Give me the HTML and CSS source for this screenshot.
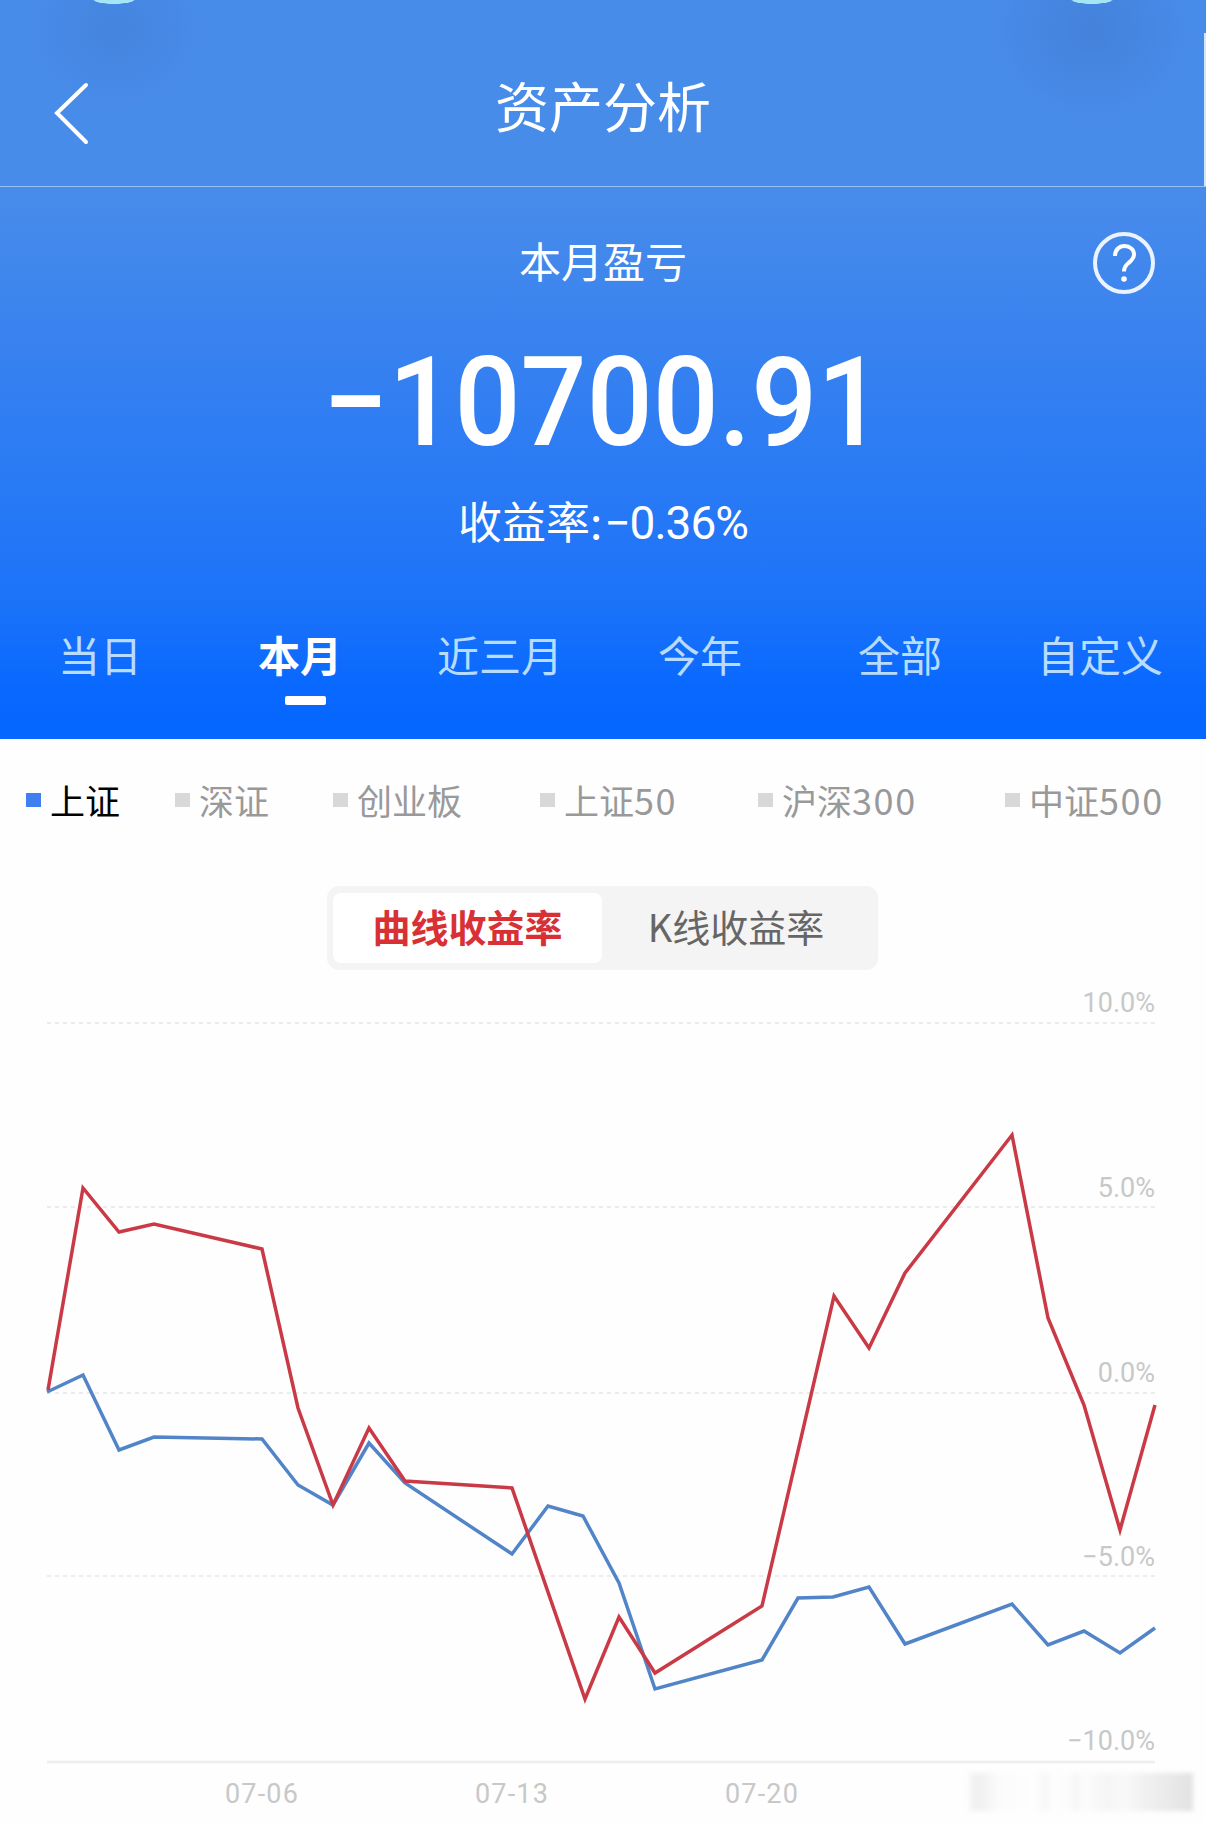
FILE: index.html
```html
<!DOCTYPE html>
<html lang="zh-CN">
<head>
<meta charset="utf-8">
<title>资产分析</title>
<link rel="stylesheet" href="styles.css">
</head>
<body>
<div class="page">
  <header class="hero">
    <div class="navbar">
      <svg class="back" viewBox="0 0 36 64"><path d="M33 3 4 31 33 60" fill="none" stroke="#fff" stroke-width="4" stroke-linecap="round"/></svg>
      <h1 class="title">资产分析</h1>
    </div>
    <div class="summary">
      <div class="period">本月盈亏</div>
      <svg class="help" viewBox="0 0 64 64"><circle cx="32" cy="32" r="29" fill="none" stroke="#eaf3ff" stroke-width="4"/><path d="M23 25c0-6 4-10 9.500-10 5.500 0 9.500 3.500 9.500 8.500 0 4-2.500 6-5.500 8.500-3 2.500-4.500 4.500-4.500 8.500" fill="none" stroke="#fff" stroke-width="4"/><circle cx="32" cy="48" r="2.800" fill="#fff"/></svg>
      <div class="amount">−10700.91</div>
      <div class="rate">收益率:<span class="rate-num">−0.36%</span></div>
    </div>
    <nav class="tabs">
      <span class="tab">当日</span>
      <span class="tab active">本月</span>
      <span class="tab">近三月</span>
      <span class="tab">今年</span>
      <span class="tab">全部</span>
      <span class="tab">自定义</span>
    </nav>
  </header>
  <main class="content">
    <div class="legend">
      <span class="legend-item on">上证</span>
      <span class="legend-item">深证</span>
      <span class="legend-item">创业板</span>
      <span class="legend-item"><span>上证<span class="num">50</span></span></span>
      <span class="legend-item"><span>沪深<span class="num">300</span></span></span>
      <span class="legend-item"><span>中证<span class="num">500</span></span></span>
    </div>
    <div class="toggle">
      <span class="toggle-btn active">曲线收益率</span>
      <span class="toggle-btn">K线收益率</span>
    </div>
    <div class="chart">
      <svg class="chart-svg" viewBox="0 985 1206 838">
        <g class="grid">
          <line x1="47" x2="1155" y1="1023" y2="1023"/>
          <line x1="47" x2="1155" y1="1207" y2="1207"/>
          <line x1="47" x2="1155" y1="1393" y2="1393"/>
          <line x1="47" x2="1155" y1="1576" y2="1576"/>
        </g>
        <line class="base" x1="47" x2="1155" y1="1762" y2="1762"/>
        <g class="ylabels">
          <text x="1155" y="1012">10.0%</text>
          <text x="1155" y="1197">5.0%</text>
          <text x="1155" y="1382">0.0%</text>
          <text x="1155" y="1566">−5.0%</text>
          <text x="1155" y="1750">−10.0%</text>
        </g>
        <g class="xlabels">
          <text x="262" y="1803">07-06</text>
          <text x="512" y="1803">07-13</text>
          <text x="762" y="1803">07-20</text>
        </g>
        <polyline class="series blue" points="47,1392 83,1375 119,1450 154,1437 262,1439 298,1485 333,1505 369,1443 405,1483 512,1554 548,1506 583,1516 619,1583 655,1689 762,1660 798,1598 833,1597 869,1587 905,1644 1012,1604 1048,1645 1084,1631 1120,1653 1155,1628"/>
        <polyline class="series red" points="48,1390 83,1188 119,1232 154,1224 262,1249 298,1408 333,1505 369,1428 405,1481 512,1488 585,1699 619,1617 655,1673 762,1606 834,1296 869,1348 905,1273 1012,1135 1048,1318 1084,1405 1120,1530 1155,1405"/>
      </svg>
      <div class="smudge"></div>
    </div>
  </main>
</div>
</body>
</html>
```
FILE: styles.css
```css
* { box-sizing: border-box; }
html, body { margin: 0; padding: 0; }
body {
  width: 1206px;
  height: 1823px;
  overflow: hidden;
  background: #fefefe;
  font-family: "Noto Sans CJK SC", "Roboto", sans-serif;
}
.page { width: 1206px; height: 1823px; display: flex; flex-direction: column; }

.hero {
  height: 740px;
  color: #fff;
  background:
    radial-gradient(ellipse 21px 4px at 114px 0, #a4e6f6 0 90%, transparent 100%),
    radial-gradient(ellipse 21px 4px at 1092px 0, #a4e6f6 0 90%, transparent 100%),
    radial-gradient(ellipse 100px 90px at 115px 30px, rgba(60,110,190,.26), rgba(60,110,190,0)),
    radial-gradient(ellipse 110px 100px at 1092px 30px, rgba(60,110,190,.34), rgba(60,110,190,0)),
    linear-gradient(180deg, #488cea 0, #488cea 190px, #3a83ef 330px, #1c73f9 600px, #0868ff 690px, #0567ff 740px);
}
.navbar {
  height: 187px;
  position: relative;
  display: flex;
  align-items: flex-end;
  justify-content: center;
  border-bottom: 1px solid rgba(255,255,255,.45);
}
.navbar::after {
  content: "";
  position: absolute;
  right: 0;
  top: 33px;
  width: 2px;
  height: 153px;
  background: #cfe6fb;
}
.back { position: absolute; left: 53px; top: 82px; width: 36px; height: 64px; }
.title { margin: 0 0 43px; font-size: 54px; line-height: 76px; font-weight: 400; letter-spacing: 0; }

.summary { position: relative; display: flex; flex-direction: column; align-items: center; }
.period { margin-top: 43px; font-size: 42px; line-height: 60px; font-weight: 400; }
.help { position: absolute; left: 1092px; top: 44px; width: 64px; height: 64px; }
.amount {
  margin-top: 48px;
  font-family: "Roboto", sans-serif;
  font-size: 125px;
  line-height: 130px;
  font-weight: 500;
  transform: scaleX(.93);
}
.rate { margin-top: 21px; font-size: 44px; line-height: 62px; font-weight: 400; display: flex; align-items: baseline; }
.rate-num { font-family: "Roboto", sans-serif; font-size: 46px; font-weight: 400; margin-left: 2px; letter-spacing: -1px; }

.tabs {
  margin-top: 71px;
  display: grid;
  grid-template-columns: repeat(6, 200px);
  font-size: 42px;
  line-height: 58px;
  font-weight: 400;
  color: #b7dcff;
  text-align: center;
}
.tab { position: relative; }
.tab.active { color: #fff; font-weight: 700; }
.tab.active::after {
  content: "";
  position: absolute;
  left: 85px;
  top: 71px;
  width: 41px;
  height: 9px;
  border-radius: 2px;
  background: #fff;
}

.content { flex: 1; display: flex; flex-direction: column; }
.legend {
  margin-top: 36px;
  padding-left: 26px;
  display: grid;
  grid-template-columns: 149px 158px 207px 218px 247px auto;
  font-size: 35px;
  line-height: 48px;
  font-weight: 400;
  color: #999;
}
.legend-item { display: flex; align-items: center; gap: 9px; white-space: nowrap; }
.legend-item::before { content: ""; width: 15px; height: 14px; background: #d8d8d8; flex: none; }
.legend-item.on { color: #000; }
.legend-item.on::before { background: #3f7ff0; }
.num { letter-spacing: 1.6px; font-size: 36px; }

.toggle {
  margin: 62px 0 0 327px;
  width: 551px;
  height: 84px;
  padding: 7px 0 7px 6px;
  display: flex;
  background: #f4f4f4;
  border-radius: 12px;
  font-size: 38px;
  line-height: 66px;
  color: #666;
}
.toggle-btn { width: 269px; text-align: center; font-weight: 400; }
.toggle-btn + .toggle-btn { width: 276px; padding-right: 8px; }
.toggle-btn.active { background: #fff; border-radius: 8px; color: #d93035; font-weight: 700; }

.chart { position: relative; flex: 1; margin-top: 15px; }
.chart-svg { display: block; width: 1206px; height: 838px; }
.grid line { stroke: #ececec; stroke-width: 2; stroke-dasharray: 4 4; }
.base { stroke: #eeeeee; stroke-width: 2.500; }
.ylabels text, .xlabels text { font-family: "Roboto", sans-serif; font-size: 27px; fill: #c8c8c8; }
.ylabels text { text-anchor: end; }
.xlabels text { text-anchor: middle; letter-spacing: 1.2px; }
.series { fill: none; stroke-width: 3.500; stroke-linejoin: miter; }
.blue { stroke: #5284c8; }
.red { stroke: #c93a46; }
.smudge {
  position: absolute;
  left: 966px;
  top: 788px;
  width: 227px;
  height: 38px;
  filter: blur(2px);
  background: linear-gradient(90deg, #fefefe 0, #f0f0f0 4%, #f2f2f2 8%, #fbfbfb 14%, #fefefe 30%, #f7f7f7 35%, #fefefe 39%, #fbfbfb 46%, #f6f6f6 48%, #fcfcfc 52%, #f5f5f5 62%, #f9f9f9 70%, #f1f1f1 78%, #e9e9e9 90%, #e2e2e2 100%);
}
```
